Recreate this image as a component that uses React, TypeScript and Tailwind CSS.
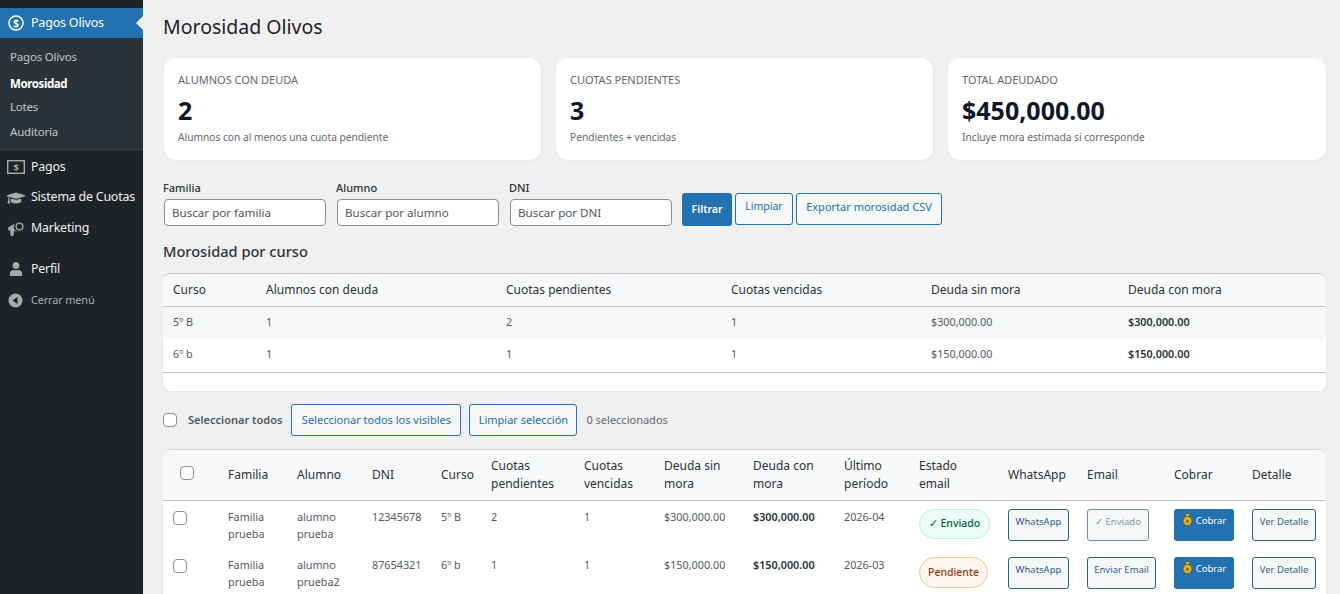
import React from "react";
import { FaGraduationCap, FaUser } from "react-icons/fa";

const font = "font-['Noto_Sans','Open_Sans',sans-serif]";

function SideItem({ icon, label, className = "" }: { icon: React.ReactNode; label: string; className?: string }) {
  return (
    <div className={`flex items-center text-[12.4px] tracking-[-0.2px] text-[#f0f0f1] ${className}`}>
      <span className="flex w-[31px] justify-center text-[#a7aaad]">{icon}</span>
      <span>{label}</span>
    </div>
  );
}

function Card({ label, value, note, className = "" }: { label: string; value: string; note: string; className?: string }) {
  return (
    <div className={`h-[102px] rounded-xl bg-white px-[14px] pt-[14px] shadow-[0_1px_3px_rgba(0,0,0,0.04)] ${className}`}>
      <div className="text-[11px] leading-[16px] text-[#646970]">{label}</div>
      <div className="mt-[7px] text-[25px] font-bold leading-[30px] text-[#0f172a]">{value}</div>
      <div className="mt-[5px] text-[10.2px] leading-[14px] text-[#646970]">{note}</div>
    </div>
  );
}

function Field({ label, placeholder }: { label: string; placeholder: string }) {
  return (
    <label className="block w-[163px]">
      <span className="block text-[11px] font-medium leading-[13px] text-[#2c3338]">{label}</span>
      <input
        placeholder={placeholder}
        className="mt-[5px] ml-[1px] h-[27px] w-[162px] rounded-[4px] border border-[#8c8f94] bg-white px-[7px] text-[11.6px] outline-none placeholder:text-[#50575e]"
      />
    </label>
  );
}

function Btn({ children, className = "" }: { children: React.ReactNode; className?: string }) {
  return (
    <button className={`rounded-[3px] border border-[#2271b1] bg-[#f6f7f7] text-[#2271b1] ${className}`}>
      {children}
    </button>
  );
}

function Box() {
  return <span className="block h-[14px] w-[14px] rounded-[4px] border border-[#8c8f94] bg-white" />;
}

function Bag() {
  return (
    <svg width="11" height="13" viewBox="0 0 11 13" className="mr-[3px] inline-block align-[-2px]">
      <path d="M3 0.5h5L7 3.5H4z" fill="#e6b422" stroke="#5b4a12" strokeWidth="0.6" />
      <circle cx="5.500" cy="8" r="4.500" fill="#e6b422" stroke="#5b4a12" strokeWidth="0.6" />
      <circle cx="5.500" cy="8" r="1.600" fill="#8a6d10" />
    </svg>
  );
}

function ActionBtn({ children, className = "" }: { children: React.ReactNode; className?: string }) {
  return (
    <button className={`flex h-[32px] items-start justify-center rounded-[3px] border bg-[#f6f7f7] pt-[4px] text-[9.5px] leading-[16px] ${className}`}>
      {children}
    </button>
  );
}

function CobrarBtn() {
  return (
    <button className="flex h-[32px] w-[60px] items-start justify-center rounded-[3px] bg-[#2271b1] pt-[4px] text-[9.5px] leading-[16px] text-white">
      <span><Bag />Cobrar</span>
    </button>
  );
}

const cursoRows = [
  ["5º B", "1", "2", "1", "$300,000.00", "$300,000.00"],
  ["6º b", "1", "1", "1", "$150,000.00", "$150,000.00"],
];

const mainRows = [
  { alumno: ["alumno", "prueba"], dni: "12345678", curso: "5º B", pend: "2", sin: "$300,000.00", per: "2026-04" },
  { alumno: ["alumno", "prueba2"], dni: "87654321", curso: "6º b", pend: "1", sin: "$150,000.00", per: "2026-03" },
];

const mainHead: React.ReactNode[] = [
  "Familia", "Alumno", "DNI", "Curso",
  <>Cuotas<br />pendientes</>, <>Cuotas<br />vencidas</>, <>Deuda sin<br />mora</>, <>Deuda con<br />mora</>,
  <>Último<br />período</>, <>Estado<br />email</>, "WhatsApp", "Email", "Cobrar", "Detalle",
];

export default function App() {
  return (
    <div className={`flex h-[594px] w-[1340px] overflow-hidden bg-[#f0f0f1] ${font}`}>
      <aside className="w-[143px] shrink-0 bg-[#1d2327] pt-[8px]">
        <div className="relative flex h-[30px] items-center bg-[#2271b1] text-[12.500px] tracking-[-0.2px] text-white">
          <span className="flex w-[31px] justify-center">
            <svg width="16" height="16" viewBox="0 0 16 16" fill="none">
              <circle cx="8" cy="8" r="7" stroke="white" strokeWidth="1.5" />
              <text x="8" y="11.6" textAnchor="middle" fontSize="10.5" fontWeight="700" fill="white">$</text>
            </svg>
          </span>
          <span>Pagos Olivos</span>
          <span className="absolute right-0 top-[8px] h-0 w-0 border-y-[7px] border-r-[7px] border-y-transparent border-r-[#f0f0f1]" />
        </div>
        <div className="h-[113px] bg-[#2c3338] pt-[6px] text-[11.5px] leading-[25px] tracking-[-0.2px] text-[#c3c4c7]">
          <div className="pl-[10px]">Pagos Olivos</div>
          <div className="h-[25px] pl-[10px] pt-[4px] font-bold leading-[21px] tracking-[-0.4px] text-white">Morosidad</div>
          <div className="pl-[10px]">Lotes</div>
          <div className="pl-[10px]">Auditoría</div>
        </div>
        <SideItem
          className="mt-[1px] h-[30px]"
          label="Pagos"
          icon={
            <svg width="18" height="14" viewBox="0 0 18 14" fill="none">
              <rect x="0.7" y="0.7" width="16.6" height="12.6" stroke="#a7aaad" strokeWidth="1.4" />
              <text x="9" y="10.8" textAnchor="middle" fontSize="9.5" fontWeight="700" fill="#a7aaad">$</text>
            </svg>
          }
        />
        <SideItem className="h-[31px]" label="Sistema de Cuotas" icon={<FaGraduationCap size={18} />} />
        <SideItem
          className="h-[30px]"
          label="Marketing"
          icon={
            <svg width="17" height="17" viewBox="0 0 17 17" fill="#a7aaad">
              <path d="M1 7.500 10 2.500a4.500 4.500 0 0 0 2.500 8.800L9.500 11.500 7 11l-.5 5h-3l-.2-5.500L1.500 10.500z" />
              <circle cx="12.500" cy="6.500" r="3.400" fill="none" stroke="#a7aaad" strokeWidth="1.400" />
            </svg>
          }
        />
        <SideItem className="mt-[11px] h-[30px]" label="Perfil" icon={<FaUser size={14} />} />
        <div className="mt-[1px] flex h-[30px] items-center text-[11px] tracking-[-0.2px] text-[#a7aaad]">
          <span className="flex w-[31px] justify-center">
            <svg width="15" height="15" viewBox="0 0 15 15">
              <circle cx="7.5" cy="7.5" r="7" fill="#a7aaad" />
              <path d="M9.500 4v7L4.500 7.500z" fill="#1d2327" />
            </svg>
          </span>
          <span>Cerrar menú</span>
        </div>
      </aside>

      <main className="w-[1197px] pl-[20px] pr-[14px]">
        <h1 className="pt-[12px] text-[19.5px] font-normal leading-[30px] text-[#1d2327]">Morosidad Olivos</h1>

        <div className="ml-[1px] mt-[16px] flex gap-[15px]">
          <Card className="w-[377px]" label="ALUMNOS CON DEUDA" value="2" note="Alumnos con al menos una cuota pendiente" />
          <Card className="w-[377px]" label="CUOTAS PENDIENTES" value="3" note="Pendientes + vencidas" />
          <Card className="w-[378px]" label="TOTAL ADEUDADO" value="$450,000.00" note="Incluye mora estimada si corresponde" />
        </div>

        <div className="mt-[21px] flex items-end">
          <div className="flex gap-[10px]">
            <Field label="Familia" placeholder="Buscar por familia" />
            <Field label="Alumno" placeholder="Buscar por alumno" />
            <Field label="DNI" placeholder="Buscar por DNI" />
          </div>
          <div className="ml-[10px] flex gap-[3px]">
            <button className="h-[33px] w-[50px] rounded-[3px] bg-[#2271b1] text-[10.5px] font-semibold text-white">Filtrar</button>
            <Btn className="mb-[1px] h-[32px] w-[58px] pb-[4px] text-[10.5px]">Limpiar</Btn>
            <Btn className="mb-[1px] h-[32px] w-[146px] pb-[4px] text-[11px]">Exportar morosidad CSV</Btn>
          </div>
        </div>

        <h2 className="mt-[15px] text-[14.6px] font-medium leading-[20px] text-[#2c3338]">Morosidad por curso</h2>

        <div className="mt-[12px] h-[118px] overflow-hidden rounded-lg border-t border-[#c3c4c7] bg-white shadow-[0_1px_2px_rgba(0,0,0,0.05)]">
          <table className="w-[1163px] table-fixed border-collapse border-b border-[#c3c4c7] text-left">
            <colgroup>
              <col className="w-[93px]" /><col className="w-[240px]" /><col className="w-[225px]" /><col className="w-[200px]" /><col className="w-[197px]" /><col className="w-[208px]" />
            </colgroup>
            <thead>
              <tr className="h-[32px] border-b border-[#c3c4c7] bg-[#f8f9fa] text-[12px] text-[#2c3338]">
                {["Curso", "Alumnos con deuda", "Cuotas pendientes", "Cuotas vencidas", "Deuda sin mora", "Deuda con mora"].map((h) => (
                  <th key={h} className="px-[10px] font-normal">{h}</th>
                ))}
              </tr>
            </thead>
            <tbody>
              {cursoRows.map((r, i) => (
                <tr key={r[0]} className={`h-[33px] text-[10.8px] text-[#555b61] ${i === 0 ? "bg-[#f6f7f7]" : "bg-white"}`}>
                  {r.map((c, j) => (
                    <td key={j} className={`px-[10px] pb-[2px] ${j === 5 ? "font-semibold text-[#2c3338]" : ""}`}>{c}</td>
                  ))}
                </tr>
              ))}
            </tbody>
          </table>
        </div>

        <div className="mt-[13px] flex h-[32px] items-center">
          <Box />
          <span className="ml-[11px] text-[11px] font-semibold text-[#50575e]">Seleccionar todos</span>
          <Btn className="ml-[9px] h-[32px] w-[170px] text-[11px]">Seleccionar todos los visibles</Btn>
          <Btn className="ml-[8px] h-[32px] w-[108px] text-[11px]">Limpiar selección</Btn>
          <span className="ml-[9px] text-[11px] text-[#646970]">0 seleccionados</span>
        </div>

        <div className="mt-[13px] overflow-hidden rounded-t-lg border-t border-[#d5d7da] bg-white shadow-[0_1px_2px_rgba(0,0,0,0.05)]">
          <table className="w-[1163px] table-fixed border-collapse text-left">
            <colgroup>
              {[65, 69, 75, 69, 50, 93, 80, 89, 91, 75, 89, 79, 87, 78, 74].map((w, i) => (
                <col key={i} style={{ width: w }} />
              ))}
            </colgroup>
            <thead>
              <tr className="h-[50px] border-b border-[#c3c4c7] bg-[#f8f9fa] text-[12px] leading-[18px] text-[#2c3338]">
                <th className="pb-[4px] pl-[17px]"><Box /></th>
                {mainHead.map((h, i) => (
                  <th key={i} className="font-normal">{h}</th>
                ))}
              </tr>
            </thead>
            <tbody className="text-[10.8px] leading-[17px] text-[#555b61]">
              {mainRows.map((r, i) => (
                <tr key={r.dni} className="h-[49px] align-top">
                  <td className="pl-[10px] pt-[10px]"><Box /></td>
                  <td className="pt-[7px]">Familia<br />prueba</td>
                  <td className="pt-[7px]">{r.alumno[0]}<br />{r.alumno[1]}</td>
                  <td className="pt-[7px]">{r.dni}</td>
                  <td className="pt-[7px]">{r.curso}</td>
                  <td className="pt-[7px]">{r.pend}</td>
                  <td className="pt-[7px]">1</td>
                  <td className="pt-[7px]">{r.sin}</td>
                  <td className="pt-[7px] font-semibold text-[#2c3338]">{r.sin}</td>
                  <td className="pt-[7px]">{r.per}</td>
                  <td className="pt-[8px]">
                    {i === 0 ? (
                      <span className="flex h-[30px] w-[71px] items-center justify-center rounded-full border border-[#bfeedd] bg-[#ecfdf5] text-[10.5px] font-medium text-[#065f46]">✓ Enviado</span>
                    ) : (
                      <span className="flex h-[31px] w-[69px] items-center justify-center rounded-full border border-[#f3c898] bg-[#fff7ed] text-[10.5px] font-medium text-[#9a3412]">Pendiente</span>
                    )}
                  </td>
                  <td className="pt-[8px]"><ActionBtn className="w-[61px] border-[#2d5f86] text-[#2c6288]">WhatsApp</ActionBtn></td>
                  <td className="pt-[8px]">
                    {i === 0 ? (
                      <ActionBtn className="w-[62px] border-[#6f8ea5] text-[#7d9bb0]">✓ Enviado</ActionBtn>
                    ) : (
                      <ActionBtn className="w-[69px] border-[#2d5f86] text-[#2c6288]">Enviar Email</ActionBtn>
                    )}
                  </td>
                  <td className="pt-[8px]"><CobrarBtn /></td>
                  <td className="pt-[8px]"><ActionBtn className="w-[64px] border-[#2d5f86] text-[#2c6288]">Ver Detalle</ActionBtn></td>
                </tr>
              ))}
            </tbody>
          </table>
        </div>
      </main>
    </div>
  );
}
